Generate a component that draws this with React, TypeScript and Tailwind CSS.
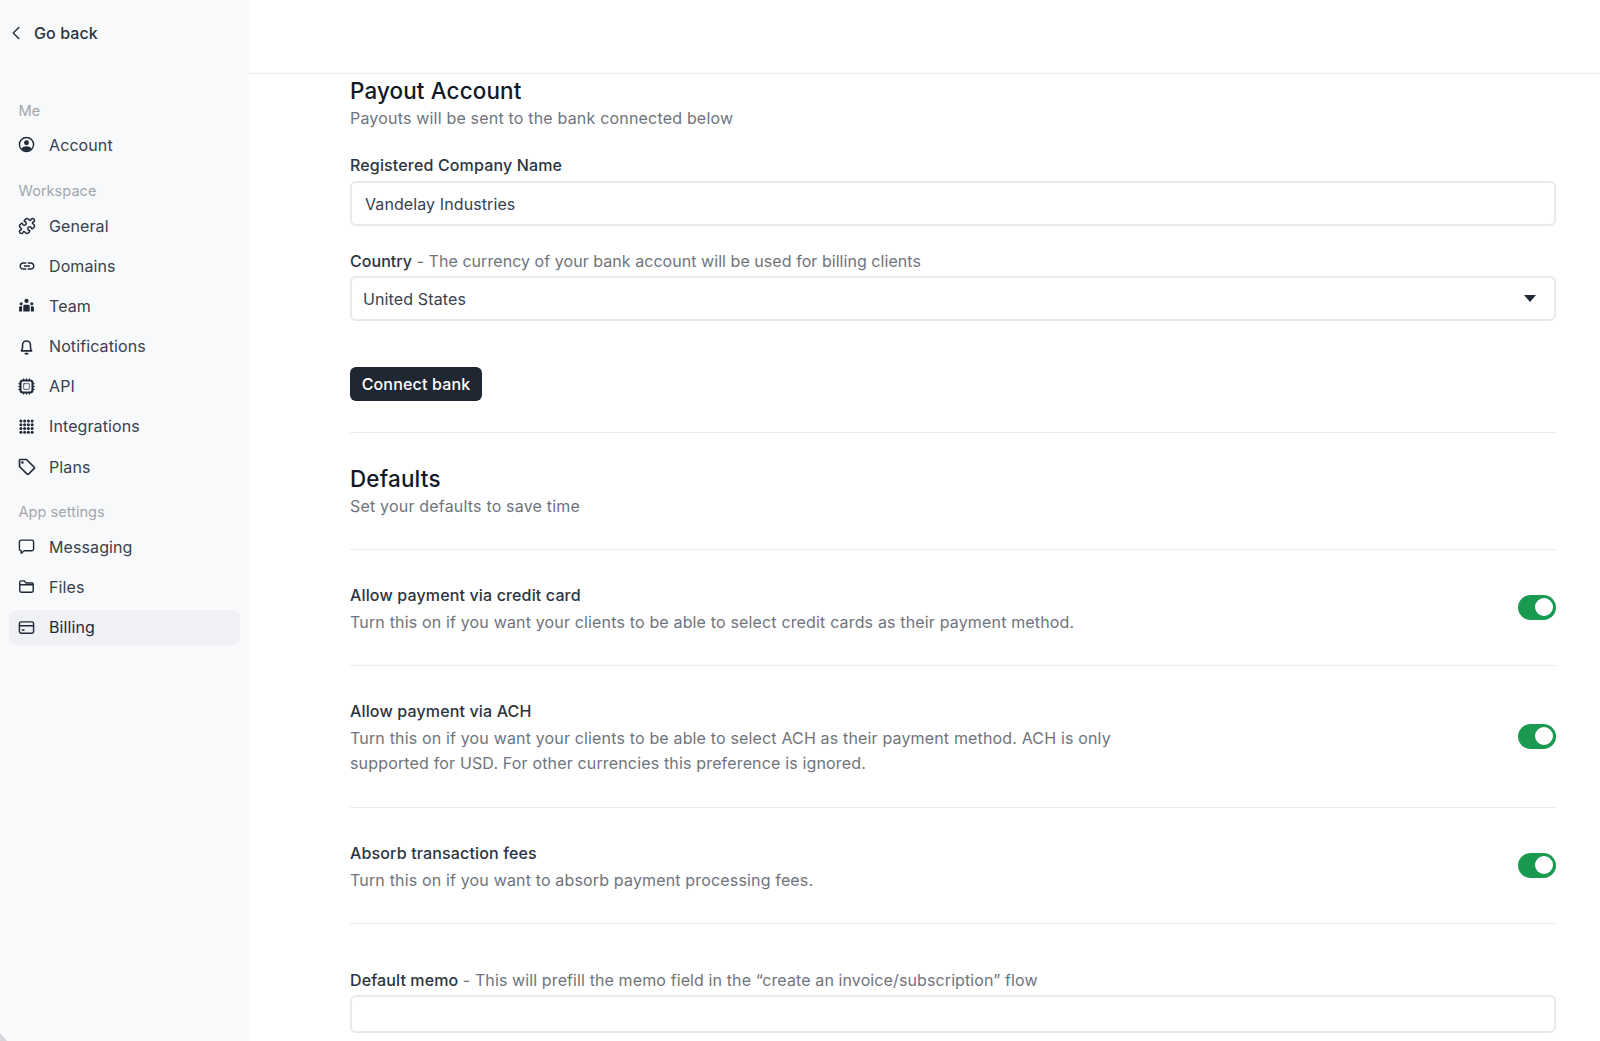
import { ChevronLeft, Puzzle } from "lucide-react";
import { MdLink, MdOutlineLocalOffer } from "react-icons/md";
import type { ReactNode } from "react";

const Ico = ({ children }: { children: ReactNode }) => (
  <svg viewBox="0 0 24 24" className="h-[17px] w-[17px] shrink-0" fill="none" stroke="#1f2937" strokeWidth="2" strokeLinecap="round" strokeLinejoin="round">
    {children}
  </svg>
);

const icons: Record<string, ReactNode> = {
  Account: (
    <Ico>
      <circle cx="12" cy="12" r="10" />
      <circle cx="12" cy="9.500" r="3.500" fill="#1f2937" stroke="none" />
      <path d="M5 18c1.500-2.500 4-3.500 7-3.500s5.500 1 7 3.500c-1.800 2.300-4.400 3.500-7 3.500S6.800 20.300 5 18z" fill="#1f2937" stroke="none" />
    </Ico>
  ),
  General: <Puzzle className="h-[18px] w-[18px] shrink-0 text-[#1f2937]" strokeWidth={2} />,
  Domains: <MdLink className="h-[18px] w-[18px] shrink-0 text-[#1f2937]" />,
  Team: (
    <svg viewBox="0 0 24 24" className="h-[17px] w-[17px] shrink-0" fill="#1f2937">
      <circle cx="12" cy="5.500" r="3" />
      <circle cx="4.500" cy="9.500" r="2.200" />
      <circle cx="19.500" cy="9.500" r="2.200" />
      <path d="M7.500 13a2 2 0 0 1 2-2h5a2 2 0 0 1 2 2v7.500h-9zM1.500 20.500V15a1.800 1.800 0 0 1 1.800-1.800h2.500v7.300zM22.500 20.500V15a1.800 1.800 0 0 0-1.800-1.800h-2.500v7.300z" />
    </svg>
  ),
  Notifications: (
    <svg viewBox="0 0 24 24" className="h-[19px] w-[19px] shrink-0" fill="none" stroke="#1f2937" strokeWidth="2" strokeLinecap="round" strokeLinejoin="round">
      <path d="M5.500 17.500c1-1.200 1.500-2.600 1.500-4.500v-3a5 5 0 0 1 10 0v3c0 1.900.5 3.300 1.500 4.500zM10.500 21h3" />
    </svg>
  ),
  API: (
    <svg viewBox="0 0 24 24" className="h-[17px] w-[17px] shrink-0" fill="none" stroke="#1f2937" strokeLinecap="round">
      <rect x="3.500" y="3.500" width="17" height="17" rx="3.500" strokeWidth="3" />
      <rect x="8" y="8" width="8" height="8" rx="0.500" strokeWidth="1" />
      <path d="M1 8h2M1 12h2M1 16h2M21 8h2M21 12h2M21 16h2M8 1v2M12 1v2M16 1v2M8 21v2M12 21v2M16 21v2" strokeWidth="1.500" />
    </svg>
  ),
  Integrations: (
    <svg viewBox="0 0 16 16" className="h-[15px] w-[15px] shrink-0" fill="#1f2937">
      {[2, 6, 10, 14].map((y) =>
        [2, 6, 10, 14].map((x) => <circle key={`${x}-${y}`} cx={x} cy={y} r="1.600" />)
      )}
    </svg>
  ),
  Plans: <MdOutlineLocalOffer className="h-[20px] w-[20px] shrink-0 text-[#1f2937]" />,
  Messaging: (
    <Ico>
      <path d="M2 5.500A2.500 2.500 0 0 1 4.500 3h15A2.500 2.500 0 0 1 22 5.500v10a2.500 2.500 0 0 1-2.500 2.500H9l-4.500 3.500V18A2.500 2.500 0 0 1 2 15.500z" />
    </Ico>
  ),
  Files: (
    <Ico>
      <path d="M2.500 8V6A2 2 0 0 1 4.500 4h4.300l2.500 3h8.200a2 2 0 0 1 2 2v9a2 2 0 0 1-2 2h-15a2 2 0 0 1-2-2zM2.500 9.500h19" />
    </Ico>
  ),
  Billing: (
    <Ico>
      <rect x="2" y="4" width="20" height="16" rx="2.500" />
      <path d="M2 9.500h20M6 15.500h2.500" />
    </Ico>
  ),
};

const SideItem = ({ label, active }: { label: string; active?: boolean }) => (
  <div className={`mx-[9px] flex h-[35px] items-center rounded-lg pl-[9px] text-[16px] tracking-[0.1px] ${active ? "bg-[#f0f1f4] text-[#1f2937]" : "text-[#374151]"}`}>
    <span className="mr-[14px] flex w-[17px] justify-center">{icons[label]}</span>
    <span>{label}</span>
  </div>
);

const SideHeading = ({ label, className }: { label: string; className: string }) => (
  <div className={`pl-[18.500px] text-[14.600px] leading-[20px] text-[#a2a6ae] ${className}`}>{label}</div>
);

const Toggle = () => (
  <div className="mb-[3px] flex h-[25px] w-[38px] shrink-0 items-center justify-end rounded-full bg-[#1a9a50] pr-[3px]">
    <div className="h-[18px] w-[18px] rounded-full bg-white" />
  </div>
);

const SettingRow = ({ title, children }: { title: string; children: ReactNode }) => (
  <div className="flex items-center justify-between border-b border-[#ececee] pt-[33px] pb-[30.600px]">
    <div className="w-[790px]">
      <div className="text-[16px] leading-[24px] font-medium tracking-[0.15px] text-[#2b3441]">{title}</div>
      <div className="mt-[3px] text-[16px] leading-[25px] tracking-[0.16px] text-[#6f747c]">{children}</div>
    </div>
    <Toggle />
  </div>
);

export default function App() {
  return (
    <div className="flex h-[1041px] overflow-hidden bg-white font-['Inter',sans-serif]">
      {/* Sidebar */}
      <aside className="relative w-[249px] shrink-0 bg-[#f8f9fb]">
        <div className="flex h-[65px] items-center gap-[7px] pl-[5px] text-[16px] tracking-[0.1px] font-medium text-[#2b3441]">
          <ChevronLeft className="h-[22px] w-[22px]" strokeWidth={1.7} />
          <span className="leading-none">Go back</span>
        </div>
        <SideHeading label="Me" className="mt-[36px] mb-[6px]" />
        <SideItem label="Account" />
        <SideHeading label="Workspace" className="mt-[19px] mb-[7px]" />
        <div className="flex flex-col gap-[5.200px]">
          {["General", "Domains", "Team", "Notifications", "API", "Integrations", "Plans"].map((l) => (
            <SideItem key={l} label={l} />
          ))}
        </div>
        <SideHeading label="App settings" className="mt-[18px] mb-[7px]" />
        <div className="flex flex-col gap-[5.200px]">
          <SideItem label="Messaging" />
          <SideItem label="Files" />
          <SideItem label="Billing" active />
        </div>
        {/* window corner showing through at the bottom left */}
        <svg viewBox="0 0 7 8" className="absolute bottom-0 left-0 h-[8px] w-[7px]">
          <path d="M0 0L7 8H0z" fill="#d5d6d9" />
        </svg>
      </aside>

      {/* Main */}
      <main className="min-w-0 flex-1">
        <div className="h-[74px] border-b border-[#ececee]" />
        <div className="ml-[101px] mr-[44px]">
          <section className="border-b border-[#ececee] pt-[1px] pb-[31px]">
            <h2 className="text-[22.400px] leading-[31px] font-medium tracking-[0.15px] text-[#111827]">Payout Account</h2>
            <p className="text-[16px] leading-[24px] tracking-[0.19px] text-[#6f747c]">Payouts will be sent to the bank connected below</p>
            <label className="mt-[23px] block text-[16px] leading-[24px] font-medium tracking-[0.15px] text-[#2b3441]">Registered Company Name</label>
            <div className="mt-[4px] flex h-[45px] items-center rounded-md border-2 border-[#e9e9ec] pl-[13px] text-[16px] tracking-[0.1px] text-[#374151]">Vandelay Industries</div>
            <div className="mt-[23px] text-[16px] leading-[24px] tracking-[0.05px] text-[#6f747c]">
              <span className="font-medium text-[#2b3441]">Country</span> - The currency of your bank account will be used for billing clients
            </div>
            <div className="mt-[3px] flex h-[45px] items-center justify-between rounded-md border-2 border-[#e9e9ec] pr-[18px] pl-[11px] text-[16px] tracking-[0.13px] text-[#374151]">
              <span>United States</span>
              <svg viewBox="0 0 12 7" className="h-[7px] w-[12px]" fill="#1f2937"><path d="M0 0h12L6 7z" /></svg>
            </div>
            <button className="mt-[46px] block h-[34px] w-[132px] rounded-md bg-[#1f2733] text-[16px] font-medium tracking-[0.17px] text-white">Connect bank</button>
          </section>
          <section className="border-b border-[#ececee] pt-[30px] pb-[30.500px]">
            <h2 className="text-[22.400px] leading-[31px] font-medium tracking-[0.2px] text-[#111827]">Defaults</h2>
            <p className="text-[16px] leading-[24px] tracking-[0.19px] text-[#6f747c]">Set your defaults to save time</p>
          </section>
          <SettingRow title="Allow payment via credit card">
            Turn this on if you want your clients to be able to select credit cards as their payment method.
          </SettingRow>
          <SettingRow title="Allow payment via ACH">
            Turn this on if you want your clients to be able to select ACH as their payment method. ACH is only supported for USD. For other currencies this preference is ignored.
          </SettingRow>
          <SettingRow title="Absorb transaction fees">Turn this on if you want to absorb payment processing fees.</SettingRow>
          <div className="mt-[44px] text-[16px] leading-[24px] tracking-[0.11px] text-[#6f747c]">
            <span className="font-medium text-[#2b3441]">Default memo</span> - This will prefill the memo field in the “create an invoice/subscription” flow
          </div>
          <div className="mt-[3px] h-[38px] rounded-md border-2 border-[#e9e9ec]" />
        </div>
      </main>
    </div>
  );
}
